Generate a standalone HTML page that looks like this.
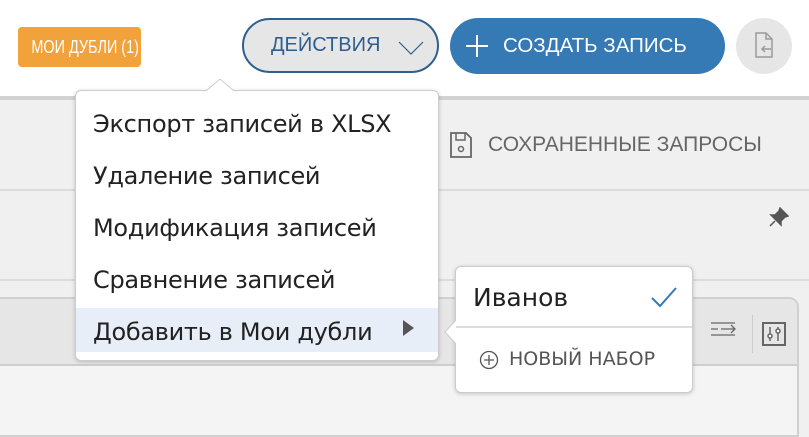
<!DOCTYPE html>
<html><head><meta charset="utf-8"><style>
*{box-sizing:border-box;margin:0;padding:0}
body{width:809px;height:426px;overflow:hidden;position:relative;background:#f0f0f0;font-family:"Liberation Sans","DejaVu Sans",sans-serif}
.abs{position:absolute;white-space:nowrap}
</style></head><body>
<div class="abs" style="left:0;top:0;width:809px;height:96px;background:#fff"></div>
<div class="abs" style="left:0;top:96px;width:809px;height:4px;background:#d2d2d2"></div>
<div class="abs" style="left:0;top:189px;width:809px;height:2px;background:#dcdcdc"></div>
<div class="abs" style="left:0;top:279px;width:809px;height:2px;background:#dcdcdc"></div>
<div class="abs" style="left:-10px;top:297px;width:809px;height:140px;border:2px solid #d0d0d0;border-radius:0 10px 0 0;background:#f4f4f4"></div>
<div class="abs" style="left:0;top:299px;width:797px;height:67px;background:#e6e6e6;border-bottom:2px solid #cfcfcf;border-radius:0 8px 0 0"></div>

<div class="abs" style="left:18px;top:27px;width:123px;height:40px;background:#f2a23a;border-radius:4px;color:#fff;font-size:18px;line-height:40px;text-align:center"><span style="display:inline-block;transform:scaleX(0.8);transform-origin:center">МОИ ДУБЛИ (1)</span></div>
<div class="abs" style="left:242px;top:18px;width:197px;height:55px;background:#e6e6e6;border:2px solid #2f5f8f;border-radius:28px;color:#2f5f8f;font-size:20px;line-height:51px;padding-left:27px">ДЕЙСТВИЯ
<svg class="abs" style="left:154px;top:20px" width="26" height="16"><path d="M1 2 L13 14 L25 2" fill="none" stroke="#2f5f8f" stroke-width="1.2"/></svg></div>
<div class="abs" style="left:450px;top:18px;width:275px;height:56px;background:#357ab5;border-radius:28px;color:#fff;font-size:20.5px;line-height:56px;padding-left:53px">СОЗДАТЬ ЗАПИСЬ
<svg class="abs" style="left:16px;top:17px" width="22" height="22"><path d="M11 0V22M0 11H22" stroke="#fff" stroke-width="2"/></svg></div>
<div class="abs" style="left:736px;top:18px;width:56px;height:56px;background:#e6e6e6;border-radius:50%">
<svg class="abs" style="left:17px;top:14px" width="22" height="28"><path d="M3 1H13L19 7V25H3Z M13 1V7H19" fill="none" stroke="#9a9a9a" stroke-width="1.5"/><path d="M18 17H9M12 14L9 17L12 20" fill="none" stroke="#9a9a9a" stroke-width="1.5"/></svg></div>

<svg class="abs" style="left:448px;top:131px" width="26" height="30"><path d="M3 2H18L23 7V26H3Z" fill="none" stroke="#666" stroke-width="1.8"/><path d="M8 2V9H17V2" fill="none" stroke="#666" stroke-width="1.5"/><circle cx="13" cy="18" r="2.5" fill="none" stroke="#666" stroke-width="1.5"/></svg>
<div class="abs" style="left:488px;top:133px;font-size:21px;color:#666">СОХРАНЕННЫЕ ЗАПРОСЫ</div>
<svg class="abs" style="left:769px;top:207px" width="20" height="20"><path d="M11 1L19 9L16 10L12 14L12 18L2 8L6 8L10 4Z M6 14L1 19" fill="#555" stroke="#555" stroke-width="1.5"/></svg>
<svg class="abs" style="left:710px;top:320px" width="28" height="16"><path d="M1 3H25M1 9H8M11 9H25M21 5L25 9L21 13M1 15H25" fill="none" stroke="#666" stroke-width="1.3"/></svg>
<div class="abs" style="left:752px;top:315px;width:1px;height:38px;background:#ccc"></div>
<svg class="abs" style="left:762px;top:322px" width="24" height="24"><rect x="1" y="1" width="22" height="22" fill="none" stroke="#666" stroke-width="2"/><path d="M8 5V19M16 5V19" stroke="#666" stroke-width="1.5"/><circle cx="8" cy="14" r="2" fill="#fff" stroke="#666" stroke-width="1.5"/><circle cx="16" cy="9" r="2" fill="#fff" stroke="#666" stroke-width="1.5"/></svg>

<!-- menu -->
<div class="abs" style="left:75px;top:90px;width:364px;height:271px;background:#fff;border:1px solid #ccc;border-radius:6px;box-shadow:0 1px 4px rgba(0,0,0,.2)"></div>
<svg class="abs" style="left:206px;top:79px" width="28" height="13"><path d="M0 12L14 0L28 12" fill="#fff" stroke="#ccc"/><rect x="0" y="12" width="28" height="2" fill="#fff"/></svg>
<div class="abs" style="left:76px;top:308px;width:362px;height:44px;background:#e7eef8"></div>
<div class="abs" style="left:93px;top:109px;font-size:24px;color:#222;font-family:'DejaVu Sans','Liberation Sans',sans-serif;letter-spacing:-0.3px">
<div style="height:52px;line-height:30px">Экспорт записей в XLSX</div>
<div style="height:52px;line-height:30px">Удаление записей</div>
<div style="height:52px;line-height:30px">Модификация записей</div>
<div style="height:52px;line-height:30px">Сравнение записей</div>
<div style="height:52px;line-height:30px">Добавить в Мои дубли</div>
</div>
<svg class="abs" style="left:403px;top:320px" width="12" height="16"><path d="M0 0L11 8L0 16Z" fill="#555"/></svg>

<!-- submenu -->
<div class="abs" style="left:455px;top:266px;width:238px;height:127px;background:#fff;border:1px solid #ccc;border-radius:6px;box-shadow:0 1px 4px rgba(0,0,0,.2)"></div>
<svg class="abs" style="left:444px;top:320px" width="13" height="24"><path d="M12 0L1 12L12 24" fill="#fff" stroke="#ccc"/><rect x="12" y="0" width="2" height="24" fill="#fff"/></svg>
<div class="abs" style="left:456px;top:326px;width:236px;height:2px;background:#ddd"></div>
<div class="abs" style="left:473px;top:283px;font-size:25px;color:#222;font-family:'DejaVu Sans','Liberation Sans',sans-serif">Иванов</div>
<svg class="abs" style="left:651px;top:286px" width="26" height="22"><path d="M1 12L9 20L25 2" fill="none" stroke="#357ab5" stroke-width="2"/></svg>
<svg class="abs" style="left:479px;top:350px" width="20" height="20"><circle cx="10" cy="10" r="8.5" fill="none" stroke="#555" stroke-width="1.3"/><path d="M10 5V15M5 10H15" stroke="#555" stroke-width="1.3"/></svg>
<div class="abs" style="left:509px;top:348px;font-size:19px;color:#555;font-family:'DejaVu Sans','Liberation Sans',sans-serif">НОВЫЙ НАБОР</div>
</body></html>
